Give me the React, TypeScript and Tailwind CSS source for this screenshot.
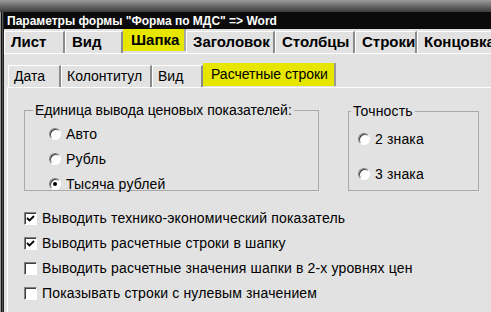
import React from "react";

const mainTabs = [
  { label: "Лист", w: 61 },
  { label: "Вид", w: 58 },
  { label: "Шапка", w: 63, active: true },
  { label: "Заголовок", w: 89 },
  { label: "Столбцы", w: 80 },
  { label: "Строки", w: 62 },
  { label: "Концовка", w: 80 },
];

const subTabs = [
  { label: "Дата", w: 53 },
  { label: "Колонтитул", w: 91 },
  { label: "Вид", w: 51 },
  { label: "Расчетные строки", w: 133, active: true },
];

const checks = [
  { label: "Выводить технико-экономический показатель", on: true },
  { label: "Выводить расчетные строки в шапку", on: true },
  { label: "Выводить расчетные значения шапки в 2-х уровнях цен", on: false },
  { label: "Показывать строки с нулевым значением", on: false },
];

function Radio({ label, on }: { label: string; on?: boolean }) {
  return (
    <div className="flex items-center gap-[5px] h-[14px]">
      <span className="relative flex h-[12px] w-[12px] items-center justify-center rounded-full border border-t-[#808080] border-l-[#808080] border-r-[#ffffff] border-b-[#ffffff] bg-white shadow-[inset_1px_1px_0_#404040]">
        {on && <span className="h-[4px] w-[4px] rounded-full bg-black" />}
      </span>
      <span>{label}</span>
    </div>
  );
}

function Check({ label, on }: { label: string; on: boolean }) {
  return (
    <div className="flex items-center gap-[5px] h-[16px]">
      <span className="flex h-[13px] w-[13px] items-center justify-center border border-t-[#808080] border-l-[#808080] border-r-white border-b-white bg-white shadow-[inset_1px_1px_0_#404040]">
        {on && (
          <svg width="9" height="9" viewBox="0 0 9 9">
            <path d="M1 4 L3.5 6.5 L8 2" stroke="#000" strokeWidth="1.8" fill="none" />
          </svg>
        )}
      </span>
      <span>{label}</span>
    </div>
  );
}

export default function App() {
  return (
    <div className="flex h-[312px] w-[491px] overflow-hidden bg-[#e2e2e2] text-black [font-family:'Liberation_Sans',Arial,sans-serif]">
      {/* window frame */}
      <div className="flex w-[4px] shrink-0">
        <div className="w-[1px] bg-[#9a9a9a]" />
        <div className="w-[1px] bg-[#111]" />
        <div className="w-[1px] bg-[#555]" />
        <div className="w-[1px] bg-[#222]" />
      </div>

      <div className="flex min-w-0 flex-1 flex-col">
        <div className="-ml-[4px] h-[12px] bg-gradient-to-b from-[#9c9c9c] to-[#3c3c3c]" />
        <div className="flex h-[17px] items-center bg-[#0b0b0b] pl-[3px] text-[12px] font-bold text-white">
          Параметры формы "Форма по МДС" =&gt; Word
        </div>

        {/* main tabs */}
        <div className="flex h-[24px] items-end">
          {mainTabs.map((t) =>
            t.active ? (
              <div
                key={t.label}
                style={{ width: t.w }}
                className="mb-[2px] flex h-[22px] shrink-0 items-center border-r-2 border-r-[#a8a8a8] bg-[#e6e600] pl-[8px] text-[15px] font-bold"
              >
                {t.label}
              </div>
            ) : (
              <div
                key={t.label}
                style={{ width: t.w }}
                className="flex h-[22px] shrink-0 items-center whitespace-nowrap border-l border-t border-r-2 border-l-white border-t-white border-r-[#8a8a8a] pl-[6px] text-[15px] font-bold"
              >
                {t.label}
              </div>
            )
          )}
        </div>
        <div className="h-[1px] bg-white" />

        {/* sub tabs */}
        <div className="mt-[9px] flex h-[24px] items-end pl-[4px]">
          {subTabs.map((t) =>
            t.active ? (
              <div
                key={t.label}
                style={{ width: t.w }}
                className="mb-[1px] flex h-[23px] shrink-0 items-center border-r-2 border-r-[#9a9a9a] bg-[#e6e600] pl-[8px] text-[14px]"
              >
                {t.label}
              </div>
            ) : (
              <div
                key={t.label}
                style={{ width: t.w }}
                className="flex h-[22px] shrink-0 items-center border-l border-t border-r-2 border-l-white border-t-white border-r-[#8a8a8a] pl-[5px] text-[14px]"
              >
                {t.label}
              </div>
            )
          )}
        </div>

        {/* panel */}
        <div className="ml-[3px] flex flex-1 flex-col border-l border-t border-white pl-[16px] pt-[12px] text-[14px] tracking-[0.15px]">
          <div className="flex items-start">
            <fieldset className="h-[91px] w-[295px] border border-[#a9a9a9] pl-[8px] pt-[6px]">
              <legend className="px-[2px] tracking-normal">Единица вывода ценовых показателей:</legend>
              <div className="flex flex-col gap-[11px] pl-[16px]">
                <Radio label="Авто" />
                <Radio label="Рубль" />
                <Radio label="Тысяча рублей" on />
              </div>
            </fieldset>
            <fieldset className="ml-[29px] mt-[1px] h-[90px] w-[131px] border border-[#a9a9a9] pl-[9px] pt-[10px]">
              <legend className="-ml-[7px] px-[2px]">Точность</legend>
              <div className="flex flex-col gap-[21px]">
                <Radio label="2 знака" />
                <Radio label="3 знака" />
              </div>
            </fieldset>
          </div>

          <div className="mt-[19px] flex flex-col gap-[9px]">
            {checks.map((c) => (
              <Check key={c.label} label={c.label} on={c.on} />
            ))}
          </div>
        </div>
      </div>
    </div>
  );
}
